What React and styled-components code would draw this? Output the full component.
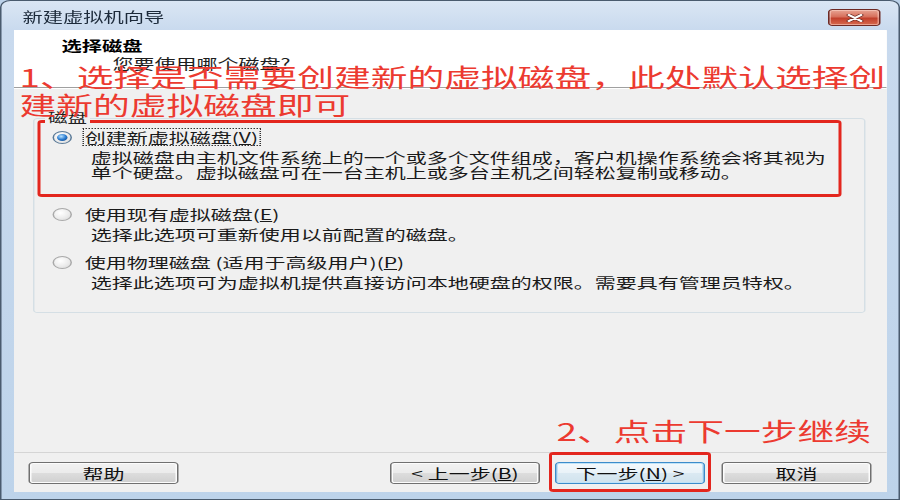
import React from 'react';
import styled, { createGlobalStyle } from 'styled-components';

const GlobalStyle = createGlobalStyle`
  html, body {
    margin: 0;
    padding: 0;
    overflow: hidden;
    background: #bcd2ea;
  }
  body {
    font-family: "Noto Sans CJK SC", "Microsoft YaHei", sans-serif;
  }
`;

// the screenshot is stretched sideways, so the dialog is drawn at 600px and widened
const Stage = styled.div`
  width: 600px;
  height: 500px;
  transform: scaleX(1.5);
  transform-origin: 0 0;
`;

const Window = styled.div`
  box-sizing: border-box;
  height: 100%;
  display: flex;
  flex-direction: column;
  border: 1px solid #4a5b6e;
  border-radius: 7px 7px 0 0;
  background: linear-gradient(to bottom, #dae6f4 0, #c9daee 29px, #bdd3ea 100%);
  padding-bottom: 7px;
`;

const TitleBar = styled.div`
  box-sizing: border-box;
  height: 29px;
  flex: none;
  display: flex;
  align-items: flex-start;
  padding: 0 12px 0 14px;
`;

const Title = styled.div`
  flex: 1;
  padding-top: 6px;
  font-size: 13.5px;
  line-height: 18px;
  color: #1c2a3a;
`;

const CloseButton = styled.div`
  box-sizing: border-box;
  width: 35px;
  height: 17px;
  margin-top: 8px;
  display: flex;
  align-items: center;
  justify-content: center;
  border: 1px solid #6e2a24;
  border-radius: 3px;
  background: linear-gradient(to bottom, #e8a493 0, #d7705c 45%, #c2402c 55%, #d66a4f 100%);
  box-shadow: inset 0 0 0 1px rgba(255, 220, 210, 0.5);
`;

const Client = styled.div`
  position: relative;
  flex: 1;
  margin: 0 8px;
  display: flex;
  flex-direction: column;
  background: #f0f0f0;
`;

const Header = styled.div`
  box-sizing: border-box;
  height: 58px;
  padding: 7px 0 0 32px;
  background: #fff;
  border-bottom: 1px solid #a0a0a0;
  box-shadow: 0 1px 0 #fff;
`;

const HeaderTitle = styled.div`
  font-size: 13.5px;
  line-height: 16px;
  font-weight: bold;
  color: #000;
`;

const HeaderSub = styled.div`
  margin: 2px 0 0 34px;
  font-size: 14px;
  line-height: 16px;
  color: #1e1e1e;
`;

const GroupBox = styled.div`
  position: relative;
  margin: 30px 14px 0 13px;
  padding: 1px 0 19px 2px;
  border: 1px solid #d5dfe5;
  border-radius: 3px;
`;

const GroupLabel = styled.span`
  position: absolute;
  top: -9px;
  left: 7px;
  padding: 0 2px;
  font-size: 13px;
  line-height: 14px;
  color: #1e1e1e;
  background: #f0f0f0;
`;

const OptionBox = styled.div`
  box-sizing: border-box;
  width: 536px;
  border-style: solid;
  border-width: 3px 2.5px;
  border-color: ${p => (p.$marked ? '#e3261e' : 'transparent')};
  border-radius: 3px;
  padding: 5px 8px ${p => (p.$marked ? '14px' : '0')};
`;

const OptionRow = styled.div`
  display: flex;
  align-items: center;
  height: 18px;
  gap: 6.5px;
`;

const Radio = styled.span`
  box-sizing: border-box;
  flex: none;
  width: 13px;
  height: 13px;
  border-radius: 50%;
  display: flex;
  align-items: center;
  justify-content: center;
  border: 1px solid ${p => (p.$checked ? '#5a7a98' : '#a9a9a9')};
  background: radial-gradient(circle at 40% 35%, #ffffff 0, #ececec 55%, #d4d4d4 100%);
`;

const RadioDot = styled.span`
  width: 7px;
  height: 7px;
  border-radius: 50%;
  background: radial-gradient(circle at 40% 35%, #b8e2ff 0, #2a7bd0 50%, #0c3c76 100%);
`;

const OptionLabel = styled.span`
  padding: 0 1px;
  font-size: 14px;
  line-height: 16px;
  color: #1a1a1a;
  white-space: nowrap;
  border: 1px dotted ${p => (p.$focused ? '#333' : 'transparent')};
`;

const Desc = styled.div`
  margin: 4px 0 0 25.5px;
  font-size: 14px;
  line-height: 15px;
  color: #1a1a1a;
  white-space: nowrap;
`;

const ButtonRow = styled.div`
  margin-top: auto;
  display: flex;
  align-items: center;
  padding: 9px 10px 8px 10px;
  border-top: 1px solid #d5d5d5;
`;

const Spacer = styled.div`
  flex: 1;
`;

const Button = styled.div`
  box-sizing: border-box;
  width: 100px;
  height: 22px;
  margin-left: ${p => p.$gap || 0}px;
  display: flex;
  align-items: center;
  justify-content: center;
  font-size: 14px;
  color: #111;
  white-space: nowrap;
  border: 1px solid ${p => (p.$primary ? '#3c8ccb' : '#707070')};
  border-radius: 3px;
  background: ${p =>
    p.$primary
      ? 'linear-gradient(to bottom, #f4f9fc 0, #e9f2f8 50%, #dbe9f2 50%, #d0e3ee 100%)'
      : 'linear-gradient(to bottom, #f2f2f2 0, #ebebeb 50%, #dddddd 50%, #cfcfcf 100%)'};
  box-shadow: inset 0 0 0 1px ${p => (p.$primary ? '#bfe3f8' : '#fcfcfc')};
`;

const Marked = styled.div`
  position: relative;
  margin-left: 10px;

  &::after {
    content: '';
    position: absolute;
    left: -4px;
    right: -4px;
    top: -10px;
    bottom: -8px;
    border: solid #e3261e;
    border-width: 3px 2.5px;
    border-radius: 3px;
    pointer-events: none;
  }
`;

const Note = styled.div`
  position: absolute;
  top: ${p => p.$top}px;
  left: ${p => p.$left}px;
  z-index: 2;
  font-size: 24.5px;
  line-height: 28px;
  color: #ec3a30;
  white-space: nowrap;
`;

const options = [
  {
    label: <>创建新虚拟磁盘(<u>V</u>)</>,
    desc: [
      '虚拟磁盘由主机文件系统上的一个或多个文件组成，客户机操作系统会将其视为',
      '单个硬盘。虚拟磁盘可在一台主机上或多台主机之间轻松复制或移动。',
    ],
    checked: true,
  },
  {
    label: <>使用现有虚拟磁盘(<u>E</u>)</>,
    desc: ['选择此选项可重新使用以前配置的磁盘。'],
  },
  {
    label: <>使用物理磁盘 (适用于高级用户)(<u>P</u>)</>,
    desc: ['选择此选项可为虚拟机提供直接访问本地硬盘的权限。需要具有管理员特权。'],
  },
];

const CloseIcon = () => (
  <svg width="12" height="8" viewBox="0 0 12 8">
    <path d="M2 1 L10 7 M10 1 L2 7" stroke="#6a2a22" strokeWidth="3.2" strokeLinecap="round" />
    <path d="M2 1 L10 7 M10 1 L2 7" stroke="#fff" strokeWidth="2" strokeLinecap="round" />
  </svg>
);

export default function App() {
  return (
    <Stage>
      <GlobalStyle />
      <Window>
        <TitleBar>
          <Title>新建虚拟机向导</Title>
          <CloseButton>
            <CloseIcon />
          </CloseButton>
        </TitleBar>
        <Client>
          <Header>
            <HeaderTitle>选择磁盘</HeaderTitle>
            <HeaderSub>您要使用哪个磁盘?</HeaderSub>
          </Header>

          <GroupBox>
            <GroupLabel>磁盘</GroupLabel>
            {options.map((o, i) => (
              <OptionBox key={i} $marked={o.checked}>
                <OptionRow>
                  <Radio $checked={o.checked}>{o.checked && <RadioDot />}</Radio>
                  <OptionLabel $focused={o.checked}>{o.label}</OptionLabel>
                </OptionRow>
                <Desc>
                  {o.desc.map((line, j) => (
                    <div key={j}>{line}</div>
                  ))}
                </Desc>
              </OptionBox>
            ))}
          </GroupBox>

          <ButtonRow>
            <Button>帮助</Button>
            <Spacer />
            <Button>&lt; 上一步(<u>B</u>)</Button>
            <Marked>
              <Button $primary>下一步(<u>N</u>) &gt;</Button>
            </Marked>
            <Button $gap={11}>取消</Button>
          </ButtonRow>

          <Note $top={33} $left={4}>
            1、选择是否需要创建新的虚拟磁盘，此处默认选择创
            <br />
            建新的虚拟磁盘即可
          </Note>
          <Note $top={387} $left={362}>2、点击下一步继续</Note>
        </Client>
      </Window>
    </Stage>
  );
}
